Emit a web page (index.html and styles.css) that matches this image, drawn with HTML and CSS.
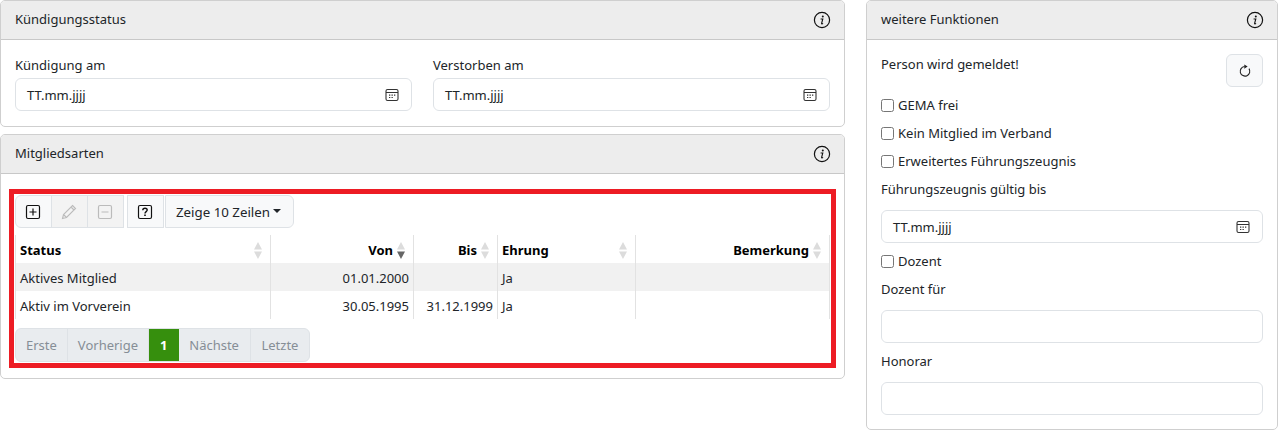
FILE: index.html
```html
<!DOCTYPE html>
<html lang="de">
<head>
    <meta charset="UTF-8">
    <meta name="viewport" content="width=device-width, initial-scale=1.0">
    <title>Mitglied</title>
    <link rel="stylesheet" href="styles.css">
</head>
<body>
    <svg class="icon-defs" width="0" height="0">
        <symbol id="icon-info" viewBox="0 0 18 18">
            <circle cx="9" cy="9" r="7.6" fill="none" stroke="#111" stroke-width="1.2"/>
            <circle cx="9.8" cy="5.4" r="1" fill="#111"/>
            <path d="M7.6 8h2.200l-1.200 4.400c-.1.500.3.700 1.500.1" fill="none" stroke="#111" stroke-width="1.100"/>
        </symbol>
        <symbol id="icon-calendar" viewBox="0 0 14 14">
            <rect x="1" y="1.500" width="12" height="11" rx="1.600" fill="none" stroke="#333" stroke-width="1.100"/>
            <path d="M1 3.900h12v1H1z" fill="#333"/>
            <path d="M4 6.600h1.300v1.200H4zM6.500 6.600h1.300v1.200H6.500zM9 6.600h1.300v1.200H9zM4 8.900h1.300v1.200H4zM6.500 8.900h1.300v1.200H6.500z" fill="#333"/>
        </symbol>
        <symbol id="icon-sort" viewBox="0 0 8 17" preserveAspectRatio="none">
            <path d="M4 0l4 7.500H0zM4 17L0 9.500h8z" fill="#dcdcdc"/>
        </symbol>
        <symbol id="icon-sort-desc" viewBox="0 0 8 17" preserveAspectRatio="none">
            <path d="M4 0l4 7.500H0z" fill="#dcdcdc"/>
            <path d="M4 17L0 9.500h8z" fill="#666"/>
        </symbol>
    </svg>

    <div class="page">
        <div class="column">
            <section class="card">
                <header class="card-header">
                    <span>Kündigungsstatus</span>
                    <svg class="info"><use href="#icon-info"/></svg>
                </header>
                <div class="card-body two-cols">
                    <div class="field">
                        <label>Kündigung am</label>
                        <div class="input">TT.mm.jjjj<svg class="cal"><use href="#icon-calendar"/></svg></div>
                    </div>
                    <div class="field">
                        <label>Verstorben am</label>
                        <div class="input">TT.mm.jjjj<svg class="cal"><use href="#icon-calendar"/></svg></div>
                    </div>
                </div>
            </section>

            <section class="card">
                <header class="card-header">
                    <span>Mitgliedsarten</span>
                    <svg class="info"><use href="#icon-info"/></svg>
                </header>
                <div class="table-body">
                    <div class="highlight">
                        <div class="toolbar">
                            <div class="btn-group">
                                <button class="tool first">
                                    <svg width="16" height="16" viewBox="0 0 16 16"><rect x="1.500" y="1.500" width="13" height="13" rx="1.500" fill="none" stroke="#111" stroke-width="1.200"/><path d="M4.500 8h7M8 4.500v7" stroke="#111" stroke-width="1.200"/></svg>
                                </button>
                                <button class="tool disabled">
                                    <svg width="16" height="16" viewBox="0 0 16 16"><path d="M11.500 1.500l3 3-9 9-4 1 1-4zM10 3l3 3M2.500 10.500l3 3" fill="none" stroke="#bbb" stroke-width="1.100"/></svg>
                                </button>
                                <button class="tool disabled">
                                    <svg width="16" height="16" viewBox="0 0 16 16"><rect x="1.500" y="1.500" width="13" height="13" rx="1.500" fill="none" stroke="#bbb" stroke-width="1.200"/><path d="M4.500 8h7" stroke="#bbb" stroke-width="1.200"/></svg>
                                </button>
                            </div>
                            <button class="tool help">
                                <svg width="16" height="16" viewBox="0 0 16 16"><rect x="1.500" y="1.500" width="13" height="13" rx="1.500" fill="none" stroke="#111" stroke-width="1.200"/><path d="M5.800 6.200c0-1.300 1-2 2.200-2s2.200.7 2.200 1.900c0 1.500-2.200 1.600-2.200 3.300" fill="none" stroke="#111" stroke-width="1.400"/><path d="M7.200 10.500h1.600v1.500H7.200z" fill="#111"/></svg>
                            </button>
                            <button class="rows-btn">Zeige 10 Zeilen<span class="caret"></span></button>
                        </div>
                        <table class="data-table">
                            <thead>
                                <tr>
                                    <th class="col-status"><div class="th-in"><span>Status</span><svg class="sort"><use href="#icon-sort"/></svg></div></th>
                                    <th class="col-von right"><div class="th-in"><span>Von</span><svg class="sort"><use href="#icon-sort-desc"/></svg></div></th>
                                    <th class="col-bis right"><div class="th-in"><span>Bis</span><svg class="sort"><use href="#icon-sort"/></svg></div></th>
                                    <th class="col-ehrung"><div class="th-in"><span>Ehrung</span><svg class="sort"><use href="#icon-sort"/></svg></div></th>
                                    <th class="col-bem right"><div class="th-in"><span>Bemerkung</span><svg class="sort"><use href="#icon-sort"/></svg></div></th>
                                </tr>
                            </thead>
                            <tbody>
                                <tr class="odd">
                                    <td>Aktives Mitglied</td>
                                    <td class="num">01.01.2000</td>
                                    <td class="num"></td>
                                    <td>Ja</td>
                                    <td></td>
                                </tr>
                                <tr>
                                    <td>Aktiv im Vorverein</td>
                                    <td class="num">30.05.1995</td>
                                    <td class="num">31.12.1999</td>
                                    <td>Ja</td>
                                    <td></td>
                                </tr>
                            </tbody>
                        </table>
                        <nav class="pagination">
                            <span class="page-item">Erste</span>
                            <span class="page-item">Vorherige</span>
                            <span class="page-item current">1</span>
                            <span class="page-item wide">Nächste</span>
                            <span class="page-item wide">Letzte</span>
                        </nav>
                    </div>
                </div>
            </section>
        </div>

        <section class="card side">
            <header class="card-header">
                <span>weitere Funktionen</span>
                <svg class="info"><use href="#icon-info"/></svg>
            </header>
            <div class="card-body">
                <div class="notice">
                    <span>Person wird gemeldet!</span>
                    <button class="refresh">
                        <svg width="14" height="14" viewBox="0 0 14 14"><path d="M6.500 2.500A4.800 4.800 0 1 0 11 4.600" fill="none" stroke="#222" stroke-width="1.100"/><path d="M6.300 .5v4.200l3.300-2.100z" fill="#222"/></svg>
                    </button>
                </div>
                <label class="check"><input type="checkbox">GEMA frei</label>
                <label class="check"><input type="checkbox">Kein Mitglied im Verband</label>
                <label class="check"><input type="checkbox">Erweitertes Führungszeugnis</label>
                <label class="row-label">Führungszeugnis gültig bis</label>
                <div class="input">TT.mm.jjjj<svg class="cal"><use href="#icon-calendar"/></svg></div>
                <label class="check after-input"><input type="checkbox">Dozent</label>
                <label class="row-label">Dozent für</label>
                <div class="input"></div>
                <label class="row-label honorar">Honorar</label>
                <div class="input"></div>
            </div>
        </section>
    </div>
</body>
</html>
```

FILE: styles.css
```css
* {
    box-sizing: border-box;
}

body {
    margin: 0;
    font-family: "Noto Sans", Arial, sans-serif;
    font-size: 13px;
    line-height: 20px;
    color: #212529;
    background: white;
    overflow: hidden;
}

.icon-defs {
    position: absolute;
}

.page {
    display: grid;
    grid-template-columns: 845px 412px;
    gap: 21px;
    align-items: start;
}

.column {
    display: flex;
    flex-direction: column;
    gap: 7px;
}

.card {
    background: white;
    border: 1px solid #cfcfcf;
    border-radius: 5px;
    overflow: hidden;
}

.card-header {
    display: flex;
    align-items: center;
    justify-content: space-between;
    height: 39px;
    padding: 0 13px 1px 14px;
    background: #ededed;
    border-bottom: 1px solid #c8c8c8;
}

.card-header span {
    margin-bottom: 2px;
}

.info {
    width: 18px;
    height: 18px;
}

.card-body {
    padding: 14px;
}

.two-cols {
    display: grid;
    grid-template-columns: 397px 397px;
    gap: 21px;
    padding-bottom: 15px;
}

.field label {
    display: block;
    height: 24px;
    line-height: 22px;
}

.input {
    display: flex;
    align-items: center;
    justify-content: space-between;
    height: 33px;
    padding: 0 12px 0 11px;
    border: 1px solid #dee2e6;
    border-radius: 6px;
    background: white;
}

.cal {
    width: 14px;
    height: 14px;
}

/* table card */
.table-body {
    padding: 15px 8px 10px;
}

.highlight {
    border: 5px solid #ed1c24;
    height: 179px;
    padding: 1px 0 0 1px;
}

.toolbar {
    display: flex;
    height: 33px;
}

.btn-group {
    display: flex;
}

.tool {
    display: flex;
    align-items: center;
    justify-content: center;
    width: 37px;
    height: 33px;
    padding: 0;
    margin: 0;
    background: #f8f9fa;
    border: 1px solid #dee2e6;
}

.tool svg {
    margin-right: 1px;
}

.tool.first {
    border-radius: 6px 0 0 6px;
}

.tool.disabled {
    margin-left: -1px;
    background: #f3f3f3;
}

.tool.help {
    margin-left: 3px;
}

.rows-btn {
    display: flex;
    align-items: center;
    height: 33px;
    width: 129px;
    margin-left: 1px;
    padding: 0 10px;
    background: #f8f9fa;
    border: 1px solid #dee2e6;
    border-radius: 0 6px 6px 0;
    font: inherit;
    font-size: 13.3px;
    color: #212529;
}

.caret {
    width: 0;
    height: 0;
    margin-left: 3px;
    margin-bottom: 2px;
    border-left: 4.5px solid transparent;
    border-right: 4.5px solid transparent;
    border-top: 4.5px solid #212529;
}

.data-table {
    width: 814px;
    margin-top: 7px;
    border-collapse: collapse;
    table-layout: fixed;
}

.data-table th,
.data-table td {
    padding: 0 4px;
    border-right: 1px solid #e2e2e2;
}

.data-table th:first-child,
.data-table td:first-child {
    border-left: 1px solid #e2e2e2;
}

.data-table th {
    height: 28px;
    padding-top: 2px;
    color: #000;
    font-weight: 700;
    text-align: left;
}

.data-table td {
    height: 28px;
    padding-top: 2px;
    color: #212529;
}

.data-table .odd td {
    background: #f1f1f1;
}

.data-table .num {
    text-align: right;
}

.col-status { width: 255px; }
.col-von { width: 143px; }
.col-bis { width: 84px; }
.col-ehrung { width: 138px; }
.col-bem { width: 194px; }

.th-in {
    display: flex;
    align-items: center;
    justify-content: space-between;
}

.right .th-in {
    justify-content: flex-end;
}

.sort {
    width: 8px;
    height: 17px;
    margin-left: 4px;
    margin-right: 4px;
}

.pagination {
    display: inline-flex;
    margin-top: 9px;
    height: 34px;
    background: #e9ecef;
    border: 1px solid #dee2e6;
    border-radius: 6px;
    overflow: hidden;
}

.page-item {
    display: flex;
    align-items: center;
    padding: 0 10px;
    color: #868e96;
    border-right: 1px solid #dee2e6;
}

.page-item.wide {
    padding: 0 10.75px;
}

.page-item:last-child {
    border-right: none;
}

.page-item.current {
    padding: 0 11px;
    background: #368f0d;
    color: white;
    border-right: none;
    font-weight: 700;
}

/* side card */
.notice {
    display: flex;
    justify-content: space-between;
    align-items: flex-start;
    height: 37px;
}

.refresh {
    display: flex;
    align-items: center;
    justify-content: center;
    width: 37px;
    height: 33px;
    padding: 0;
    background: #f8f9fa;
    border: 1px solid #dee2e6;
    border-radius: 6px;
}

.check {
    display: flex;
    align-items: center;
    height: 28px;
}

.check input {
    width: 13px;
    height: 13px;
    margin: 0 4px 0 0;
}

.row-label {
    display: flex;
    align-items: center;
    height: 28px;
    margin-bottom: 7px;
}

.after-input {
    margin-top: 4px;
}

.honorar {
    margin-top: 4px;
}
```
